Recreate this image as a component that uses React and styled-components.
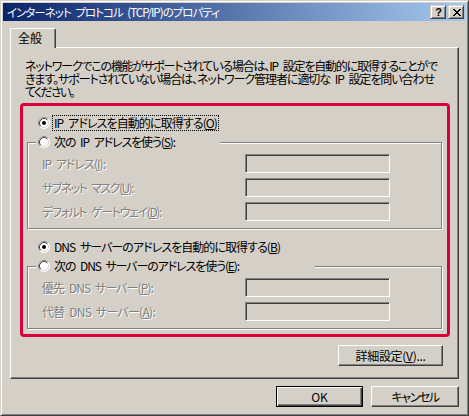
import React, { useLayoutEffect, useRef, useState } from "react";
import styled, { createGlobalStyle, css } from "styled-components";

const FACE = "#d4d0c8";
const SHADOW = "#808080";
const DARK = "#404040";
const HILITE = "#ffffff";
const FONT = `"Noto Sans CJK JP", "Noto Sans", sans-serif`;

const Global = createGlobalStyle`
  html, body { margin: 0; padding: 0; background: ${FACE}; }
  body {
    font-family: ${FONT};
    font-size: 12px;
    color: #000;
    font-feature-settings: "palt";
  }
  * { box-sizing: border-box; }
`;

const Window = styled.div`
  width: 469px;
  height: 416px;
  background: ${FACE};
  border: 1px solid;
  border-color: ${FACE} ${DARK} ${DARK} ${FACE};
  box-shadow: inset 1px 1px 0 ${HILITE}, inset -1px -1px 0 ${SHADOW};
  padding: 2px;
  display: flex;
  flex-direction: column;
`;

const TitleBar = styled.div`
  height: 18px;
  display: flex;
  align-items: center;
  padding: 0 2px 0 2px;
  background: linear-gradient(to right, #0a246a, #a6caf0);
  color: #fff;
`;

const TitleText = styled.span`
  flex: 1;
  font-size: 11.5px;
  line-height: 18px;
  white-space: nowrap;
  padding-left: 2px;
`;

const CaptionButtons = styled.div`
  display: flex;
  gap: 2px;
`;

const CaptionButton = styled.div`
  width: 16px;
  height: 14px;
  background: ${FACE};
  border: 1px solid;
  border-color: ${FACE} ${DARK} ${DARK} ${FACE};
  box-shadow: inset 1px 1px 0 ${HILITE}, inset -1px -1px 0 ${SHADOW};
  display: flex;
  align-items: center;
  justify-content: center;
  color: #000;
  font: bold 11px "Liberation Sans", sans-serif;
  line-height: 12px;
  padding-left: 1px;
`;

const Body = styled.div`
  flex: 1;
  display: flex;
  flex-direction: column;
  padding: 7px 7px 0 7px;
`;

const TabStrip = styled.div`
  height: 19px;
  display: flex;
  align-items: flex-end;
`;

const Tab = styled.div`
  position: relative;
  z-index: 1;
  width: 46px;
  height: 20px;
  margin-bottom: -1px;
  background: ${FACE};
  border-left: 1px solid ${HILITE};
  border-top: 1px solid ${HILITE};
  border-right: 1px solid ${DARK};
  box-shadow: inset -1px 0 0 ${SHADOW};
  border-radius: 2px 2px 0 0;
  display: flex;
  align-items: center;
  padding: 0 0 2px 7px;
  font-size: 12px;
  line-height: 14px;
`;

const Panel = styled.div`
  height: 332px;
  background: ${FACE};
  border-left: 1px solid ${HILITE};
  border-top: 1px solid ${HILITE};
  border-right: 1px solid ${DARK};
  border-bottom: 1px solid ${DARK};
  box-shadow: inset -1px -1px 0 ${SHADOW};
  padding: 11px 15px 0 9px;
  display: flex;
  flex-direction: column;
`;

const Description = styled.div`
  padding-left: 5px;
  font-size: 12px;
  line-height: 13px;
  display: flex;
  flex-direction: column;
  align-items: flex-start;
`;

const FitSpan = styled.span`
  display: inline-block;
  white-space: nowrap;
`;

const RedFrame = styled.div`
  margin-top: 5px;
  width: 430px;
  border: 3px solid #d8003a;
  border-radius: 4px;
  padding: 8px 0 5px 4px;
  display: flex;
  flex-direction: column;
`;

const RadioRow = styled.div`
  height: 17px;
  display: flex;
  align-items: center;
  gap: 3px;
  margin-left: ${(p) => p.$indent ?? 11}px;
  margin-top: ${(p) => p.$top ?? 0}px;
  white-space: nowrap;
  line-height: 14px;
`;

const RadioLabel = styled.span`
  padding: 0 1px;
  line-height: 14px;
  ${(p) =>
    p.$focus &&
    css`
      outline: 1px dotted #000;
      outline-offset: 0;
    `}
`;

const Group = styled.div`
  margin-top: 11px;
  width: 415px;
  border: 1px solid ${SHADOW};
  box-shadow: 1px 1px 0 ${HILITE}, inset 1px 1px 0 ${HILITE};
  padding-bottom: 7px;
  display: flex;
  flex-direction: column;
`;

const Caption = styled(RadioRow)`
  width: ${(p) => p.$w}px;
  margin-top: -10px;
  margin-left: 8px;
  padding-left: 2px;
  background: ${FACE};
`;

const FieldGrid = styled.div`
  margin-top: 4px;
  padding-left: 14px;
  display: grid;
  grid-template-columns: 203px 145px;
  row-gap: 5px;
  align-items: center;
`;

const DisabledLabel = styled.span`
  color: ${SHADOW};
  text-shadow: 1px 1px 0 ${HILITE};
  white-space: nowrap;
  line-height: 14px;
`;

const Field = styled.div`
  height: 19px;
  width: 145px;
  border: 1px solid;
  border-color: ${SHADOW} ${HILITE} ${HILITE} ${SHADOW};
  box-shadow: inset 1px 1px 0 ${DARK}, inset -1px -1px 0 ${FACE};
  background: ${FACE};
`;

const ButtonRow = styled.div`
  display: flex;
  justify-content: flex-end;
  gap: ${(p) => p.$gap ?? 8}px;
  margin-top: ${(p) => p.$top ?? 0}px;
`;

const Button = styled.button`
  width: ${(p) => p.$w}px;
  height: 21px;
  padding: 0;
  margin: 0;
  background: ${FACE};
  font-family: ${FONT};
  font-size: 12px;
  font-feature-settings: "palt";
  line-height: 14px;
  color: #000;
  border: 1px solid;
  border-color: ${HILITE} ${DARK} ${DARK} ${HILITE};
  box-shadow: inset -1px -1px 0 ${SHADOW};
  display: flex;
  align-items: center;
  justify-content: center;
  ${(p) =>
    p.$default &&
    css`
      border-color: #000;
      box-shadow: inset 1px 1px 0 ${HILITE}, inset -1px -1px 0 ${DARK},
        inset -2px -2px 0 ${SHADOW};
    `}
`;

/* Text whose letter spacing is computed at run time so that it spans the
   width the original bitmap font gave it; spaces keep their width plus a bit. */
const SPACE_EXTRA = 2;
function Fit({ w, children }) {
  const ref = useRef(null);
  const [sp, setSp] = useState({ ls: 0, ws: 0 });
  useLayoutEffect(() => {
    let alive = true;
    const measure = () => {
      const el = ref.current;
      if (!el || !alive) return;
      const prevL = el.style.letterSpacing;
      const prevW = el.style.wordSpacing;
      el.style.letterSpacing = "0px";
      el.style.wordSpacing = "0px";
      const natural = el.getBoundingClientRect().width;
      el.style.letterSpacing = prevL;
      el.style.wordSpacing = prevW;
      const text = el.textContent;
      const spaces = (text.match(/ /g) || []).length;
      const n = Math.max(1, text.length - spaces);
      const ls = (w - natural - spaces * SPACE_EXTRA) / n;
      setSp({ ls, ws: SPACE_EXTRA - ls });
    };
    measure();
    if (document.fonts && document.fonts.ready) document.fonts.ready.then(measure);
    return () => {
      alive = false;
    };
  }, [w]);
  return (
    <FitSpan ref={ref} style={{ letterSpacing: `${sp.ls}px`, wordSpacing: `${sp.ws}px` }}>
      {children}
    </FitSpan>
  );
}

function RadioIcon({ checked }) {
  return (
    <svg width="12" height="12" viewBox="0 0 12 12" style={{ flex: "none" }}>
      <circle cx="6" cy="6" r="5.5" fill="#fff" stroke={HILITE} />
      <path d="M2.11 9.89 A5.5 5.5 0 0 1 9.89 2.11" fill="none" stroke={SHADOW} />
      <path d="M2.82 9.18 A4.5 4.5 0 0 1 9.18 2.82" fill="none" stroke={DARK} />
      <path d="M9.18 2.82 A4.5 4.5 0 0 1 2.82 9.18" fill="none" stroke={FACE} />
      {checked && <circle cx="6" cy="6" r="2" fill="#000" />}
    </svg>
  );
}

function CloseGlyph() {
  const rows = [
    [0, 1, 6, 7],
    [1, 2, 5, 6],
    [2, 3, 4, 5],
    [3, 4],
    [2, 3, 4, 5],
    [1, 2, 5, 6],
    [0, 1, 6, 7],
  ];
  return (
    <svg width="8" height="7" viewBox="0 0 8 7" shapeRendering="crispEdges">
      {rows.map((cols, y) =>
        cols.map((x) => <rect key={`${x}-${y}`} x={x} y={y} width="1" height="1" fill="#000" />)
      )}
    </svg>
  );
}

function Radio({ checked, focus, children, indent, top, w }) {
  return (
    <RadioRow $indent={indent} $top={top}>
      <RadioIcon checked={checked} />
      <RadioLabel $focus={focus}>
        <Fit w={w}>{children}</Fit>
      </RadioLabel>
    </RadioRow>
  );
}

function FieldRow({ label, w }) {
  return (
    <>
      <DisabledLabel>
        <Fit w={w}>{label}</Fit>
      </DisabledLabel>
      <Field />
    </>
  );
}

export default function App() {
  return (
    <>
      <Global />
      <Window>
        <TitleBar>
          <TitleText>
            <Fit w={212}>インターネット プロトコル (TCP/IP)のプロパティ</Fit>
          </TitleText>
          <CaptionButtons>
            <CaptionButton>?</CaptionButton>
            <CaptionButton>
              <CloseGlyph />
            </CaptionButton>
          </CaptionButtons>
        </TitleBar>
        <Body>
          <TabStrip>
            <Tab>全般</Tab>
          </TabStrip>
          <Panel>
            <Description>
              <Fit w={412}>ネットワークでこの機能がサポートされている場合は、IP 設定を自動的に取得することがで</Fit>
              <Fit w={409}>きます。サポートされていない場合は、ネットワーク管理者に適切な IP 設定を問い合わせ</Fit>
              <Fit w={49}>てください。</Fit>
            </Description>
            <RedFrame>
              <Radio checked focus w={163}>
                IP アドレスを自動的に取得する(<u>O</u>)
              </Radio>
              <Group>
                <Caption $w={184}>
                  <RadioIcon />
                  <RadioLabel>
                    <Fit w={121}>
                      次の IP アドレスを使う(<u>S</u>):
                    </Fit>
                  </RadioLabel>
                </Caption>
                <FieldGrid>
                  <FieldRow w={63} label={<>IP アドレス(<u>I</u>):</>} />
                  <FieldRow w={91} label={<>サブネット マスク(<u>U</u>):</>} />
                  <FieldRow w={119} label={<>デフォルト ゲートウェイ(<u>D</u>):</>} />
                </FieldGrid>
              </Group>
              <Radio checked top={9} w={226}>
                DNS サーバーのアドレスを自動的に取得する(<u>B</u>)
              </Radio>
              <Group>
                <Caption $w={279}>
                  <RadioIcon />
                  <RadioLabel>
                    <Fit w={185}>
                      次の DNS サーバーのアドレスを使う(<u>E</u>):
                    </Fit>
                  </RadioLabel>
                </Caption>
                <FieldGrid>
                  <FieldRow w={111} label={<>優先 DNS サーバー(<u>P</u>):</>} />
                  <FieldRow w={113} label={<>代替 DNS サーバー(<u>A</u>):</>} />
                </FieldGrid>
              </Group>
            </RedFrame>
            <ButtonRow $top={8}>
              <Button $w={105}>
                <Fit w={70}>
                  詳細設定(<u>V</u>)...
                </Fit>
              </Button>
            </ButtonRow>
          </Panel>
          <ButtonRow $top={7}>
            <Button $w={87} $default>
              OK
            </Button>
            <Button $w={88}>
              <Fit w={47}>キャンセル</Fit>
            </Button>
          </ButtonRow>
        </Body>
      </Window>
    </>
  );
}
